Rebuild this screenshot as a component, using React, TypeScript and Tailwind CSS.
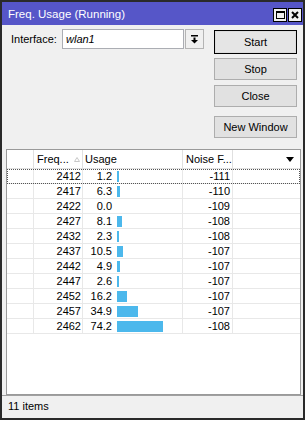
import React from "react";

const rows: [number, number, number][] = [
  [2412, 1.2, -111],
  [2417, 6.3, -110],
  [2422, 0.0, -109],
  [2427, 8.1, -108],
  [2432, 2.3, -108],
  [2437, 10.5, -107],
  [2442, 4.9, -107],
  [2447, 2.6, -107],
  [2452, 16.2, -107],
  [2457, 34.9, -107],
  [2462, 74.2, -108],
];

function barWidth(v: number) {
  if (v <= 0) return 0;
  return Math.max(2, Math.floor(v * 0.62));
}

function Btn({ label, main }: { label: string; main?: boolean }) {
  return (
    <div
      className={
        main
          ? "h-[24px] border border-black bg-[#e5e5e5] shadow-[inset_0_0_0_1px_#dcdcdc] flex items-center justify-center"
          : "h-[22px] border border-[#adadad] bg-[#e1e1e1] flex items-center justify-center"
      }
    >
      {label}
    </div>
  );
}

export default function App() {
  return (
    <div className="w-[307px] h-[422px] bg-white font-['Liberation_Sans',Arial,sans-serif] text-[11px] leading-[13px] text-black">
      <div className="w-[305px] h-[420px] border-2 border-[#2a2a2a] bg-[#f0f0f0] flex flex-col">
        {/* title bar */}
        <div className="h-[23px] bg-[#5656c8] flex items-start pl-[6px] pr-[1px]">
          <span className="text-white text-[11.5px] pt-[6px] flex-1">Freq. Usage (Running)</span>
          <div className="mt-[6px] flex gap-[1px]">
            <div className="w-[14px] h-[14px] border border-black bg-[#f0f0f0] flex items-center justify-center">
              <div className="w-[9px] h-[8px] border border-black border-t-2" />
            </div>
            <div className="w-[14px] h-[14px] border border-black bg-[#f0f0f0] flex items-center justify-center">
              <svg width="8" height="8" viewBox="0 0 8 8">
                <path d="M1 1 L7 7 M7 1 L1 7" stroke="black" strokeWidth="2" />
              </svg>
            </div>
          </div>
        </div>

        {/* top controls */}
        <div className="flex pt-[4px]">
          <div className="flex items-center h-[20px] pl-[9px]">
            <span className="w-[51px]">Interface:</span>
            <div className="w-[122px] h-[20px] border border-[#abadb3] bg-white flex items-center pl-[3px] italic">
              wlan1
            </div>
            <div className="ml-[1px] w-[19px] h-[20px] border border-[#b4b4b4] bg-[#f0f0f0] flex items-center justify-center">
              <svg width="9" height="9" viewBox="0 0 9 9">
                <rect x="1" y="0" width="7" height="1.5" fill="black" />
                <rect x="3.5" y="2.5" width="2" height="2.5" fill="black" />
                <path d="M1 5 L8 5 L4.5 8.5 Z" fill="black" />
              </svg>
            </div>
          </div>
          <div className="ml-[10px] w-[83px] mt-[1px] flex flex-col">
            <Btn label="Start" main />
            <div className="mt-[4px]">
              <Btn label="Stop" />
            </div>
            <div className="mt-[5px]">
              <Btn label="Close" />
            </div>
            <div className="mt-[9px]">
              <Btn label="New Window" />
            </div>
          </div>
        </div>

        {/* table */}
        <div className="flex-1 mt-[11px] ml-[4px] mr-[2px] border border-[#9a9a9a] bg-white flex flex-col">
          <div className="h-[19px] flex border-b border-[#e0e0e0]">
            <div className="w-[27px] border-r border-[#e0e0e0]" />
            <div className="w-[49px] border-r border-[#e0e0e0] flex items-center pl-[3px]">
              <span>Freq...</span>
              <svg className="ml-[5px]" width="6" height="5" viewBox="0 0 6 5">
                <path d="M0.5 4.5 L3 0.5 L5.5 4.5 Z" fill="none" stroke="#c8c8c8" strokeWidth="1" />
              </svg>
            </div>
            <div className="w-[100px] border-r border-[#e0e0e0] flex items-center pl-[2px]">Usage</div>
            <div className="w-[50px] border-r border-[#e0e0e0] flex items-center pl-[3px]">Noise F...</div>
            <div className="flex-1 flex items-center justify-end pr-[6px]">
              <svg width="8" height="5" viewBox="0 0 8 5">
                <path d="M0 0 L8 0 L4 5 Z" fill="black" />
              </svg>
            </div>
          </div>
          {rows.map(([f, u, n], i) => (
            <div
              key={f}
              className={
                "h-[15px] flex border-b border-[#e8e8e8]" +
                (i === 0 ? " outline-1 outline-dotted outline-[#555] -outline-offset-1" : "")
              }
            >
              <div className="w-[27px] border-r border-[#e8e8e8]" />
              <div className="w-[49px] border-r border-[#e8e8e8] flex items-center justify-end pr-[1px]">{f}</div>
              <div className="w-[100px] border-r border-[#e8e8e8] flex items-center">
                <span className="w-[29px] text-right">{u.toFixed(1)}</span>
                <div className="ml-[5px] h-[11px] bg-[#4cb8ec]" style={{ width: barWidth(u) }} />
              </div>
              <div className="w-[50px] border-r border-[#e8e8e8] flex items-center justify-end pr-[2px]">{n}</div>
              <div className="flex-1" />
            </div>
          ))}
        </div>

        {/* status bar */}
        <div className="h-[23px] flex items-start pt-[4px] pl-[6px] border-t border-[#a0a0a0]">11 items</div>
      </div>
    </div>
  );
}
